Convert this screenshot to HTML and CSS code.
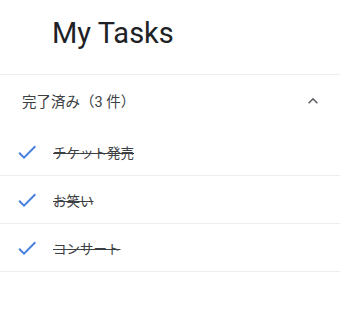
FILE: index.html
```html
<!DOCTYPE html>
<html lang="ja">
<head>
<meta charset="utf-8">
<link rel="stylesheet" href="styles.css">
</head>
<body>
<div class="app">
  <header class="title-bar">
    <h1 class="title">My Tasks</h1>
  </header>
  <section class="completed">
    <div class="completed-head">
      <span class="completed-label">完了済み（3 件）</span>
      <svg class="chevron" viewBox="0 0 24 24" width="20" height="20"><path d="M7.41 15.41L12 10.83l4.59 4.58L18 14l-6-6-6 6z"/></svg>
    </div>
    <ul class="task-list">
      <li class="task">
        <svg class="check" viewBox="0 0 24 24" width="24" height="24"><path d="M9 16.17L4.83 12l-1.42 1.41L9 19 21 7l-1.41-1.41z"/></svg>
        <span class="task-text">チケット発売</span>
      </li>
      <li class="task">
        <svg class="check" viewBox="0 0 24 24" width="24" height="24"><path d="M9 16.17L4.83 12l-1.42 1.41L9 19 21 7l-1.41-1.41z"/></svg>
        <span class="task-text">お笑い</span>
      </li>
      <li class="task">
        <svg class="check" viewBox="0 0 24 24" width="24" height="24"><path d="M9 16.17L4.83 12l-1.42 1.41L9 19 21 7l-1.41-1.41z"/></svg>
        <span class="task-text">コンサート</span>
      </li>
    </ul>
  </section>
</div>
</body>
</html>
```

FILE: styles.css
```css
html, body {
  margin: 0;
  padding: 0;
  background: #ffffff;
}
body {
  font-family: Roboto, "Noto Sans CJK JP", sans-serif;
  color: #202124;
}
.app {
  width: 340px;
}
.title-bar {
  height: 75px;
  border-bottom: 1px solid #eeeeee;
  display: flex;
  align-items: flex-start;
  padding-left: 52px;
  box-sizing: border-box;
}
.title {
  margin: 0;
  padding-top: 15px;
  font-size: 29px;
  font-weight: 400;
  line-height: 36px;
  color: #202124;
}
.completed-head {
  height: 53px;
  display: flex;
  align-items: center;
  justify-content: space-between;
  padding: 0 17px 2px 22px;
  box-sizing: border-box;
}
.completed-label {
  font-size: 14.5px;
  color: #3c4043;
}
.chevron {
  fill: #5f6368;
}
.task-list {
  list-style: none;
  margin: 0;
  padding: 0;
}
.task {
  height: 48px;
  display: flex;
  align-items: center;
  border-bottom: 1px solid #eeeeee;
  box-sizing: border-box;
  padding-left: 15px;
}
.check {
  fill: #4a7fe0;
  flex: none;
}
.task-text {
  margin-left: 14px;
  font-size: 13.5px;
  color: #3c4043;
  text-decoration: line-through;
}
```
